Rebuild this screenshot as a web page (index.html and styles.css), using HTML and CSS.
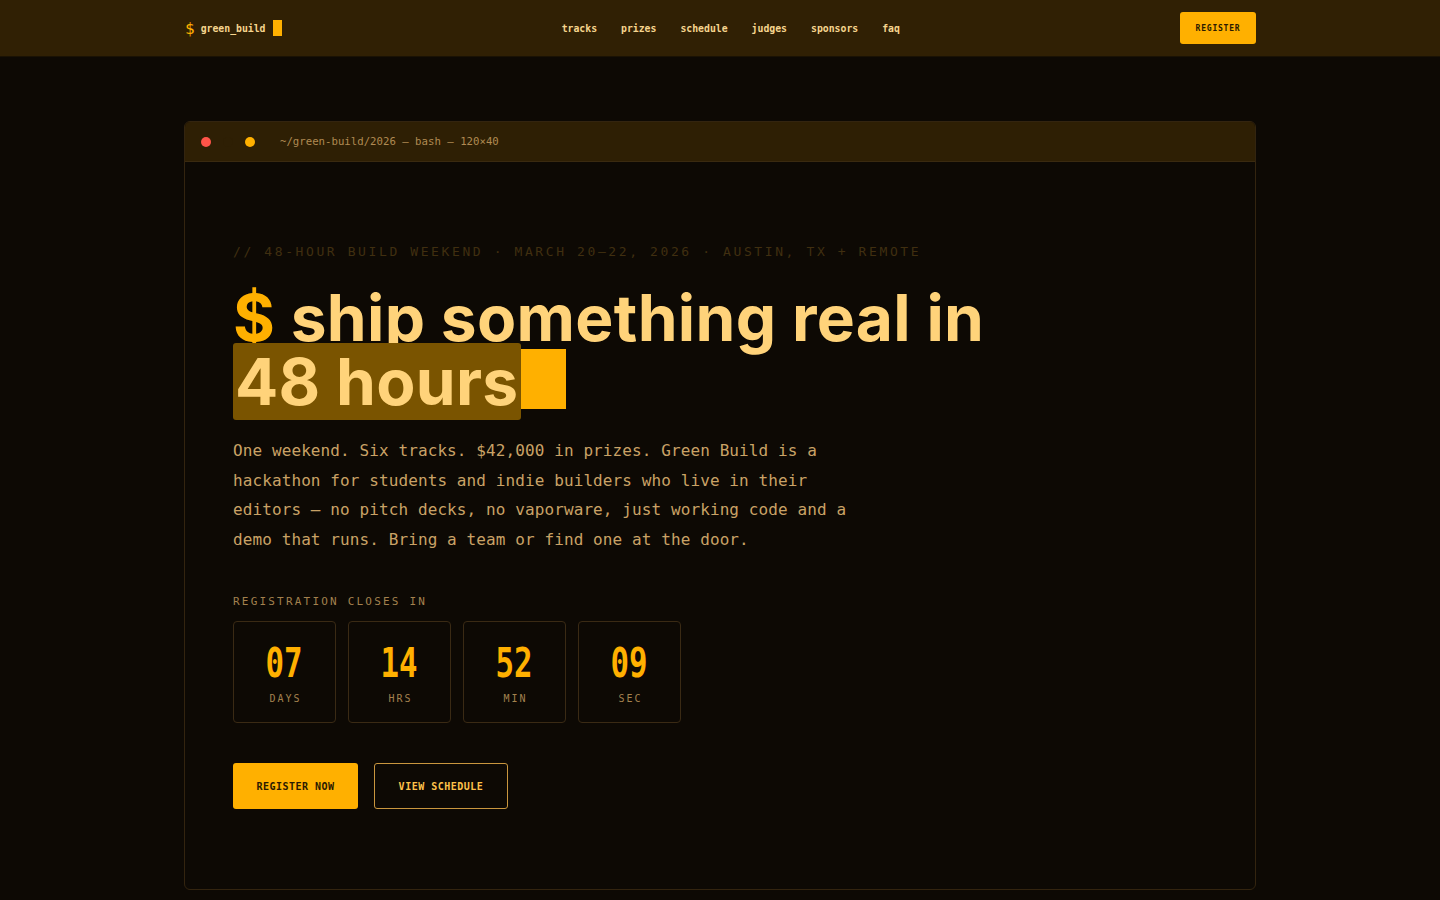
FILE: index.html
```html
<!DOCTYPE html>
<html lang="en">
<head>
<meta charset="utf-8">
<title>green_build</title>
<link rel="stylesheet" href="styles.css">
</head>
<body>
<header class="nav">
  <div class="nav-inner">
    <a class="logo" href="#"><span class="logo-dollar">$</span><span class="logo-name">green_build</span><span class="logo-cursor"></span></a>
    <nav class="links">
      <a href="#">tracks</a>
      <a href="#">prizes</a>
      <a href="#">schedule</a>
      <a href="#">judges</a>
      <a href="#">sponsors</a>
      <a href="#">faq</a>
    </nav>
    <a class="nav-btn" href="#">REGISTER</a>
  </div>
</header>
<main class="main">
  <section class="term">
    <div class="term-bar">
      <span class="dot dot-red"></span>
      <span class="dot dot-green"></span>
      <span class="dot dot-amber"></span>
      <span class="term-title">~/green-build/2026 — bash — 120×40</span>
    </div>
    <div class="term-body">
      <p class="eyebrow">// 48-HOUR BUILD WEEKEND · MARCH 20–22, 2026 · AUSTIN, TX + REMOTE</p>
      <h1 class="headline"><span class="prompt">$</span> ship something real in<br><span class="hl">48 hours</span><span class="cursor"></span></h1>
      <p class="lede">One weekend. Six tracks. $42,000 in prizes. Green Build is a hackathon for students and indie builders who live in their editors — no pitch decks, no vaporware, just working code and a demo that runs. Bring a team or find one at the door.</p>
      <p class="count-label">REGISTRATION CLOSES IN</p>
      <div class="countdown">
        <div class="cell"><span class="num">07</span><span class="unit">DAYS</span></div>
        <div class="cell"><span class="num">14</span><span class="unit">HRS</span></div>
        <div class="cell"><span class="num">52</span><span class="unit">MIN</span></div>
        <div class="cell"><span class="num">09</span><span class="unit">SEC</span></div>
      </div>
      <div class="actions">
        <a class="btn btn-primary" href="#">REGISTER NOW</a>
        <a class="btn btn-ghost" href="#">VIEW SCHEDULE</a>
      </div>
    </div>
  </section>
</main>
</body>
</html>
```
FILE: styles.css
```css
* { box-sizing: border-box; }
html, body { margin: 0; padding: 0; }
body {
  background: #0d0904;
  color: #c9a266;
  font-family: "DejaVu Sans Mono", "Liberation Mono", monospace;
  min-height: 900px;
}
a { text-decoration: none; color: inherit; }

.nav {
  background: #302004;
  height: 57px;
  border-bottom: 1px solid #1a1204;
}
.nav-inner {
  max-width: 1120px;
  margin: 0 auto;
  padding: 0 24px;
  height: 56px;
  display: flex;
  align-items: center;
  justify-content: space-between;
}
.logo {
  display: flex;
  align-items: center;
  font-size: 9.8px;
  font-weight: bold;
  color: #f6d58e;
}
.logo-dollar {
  color: #ffb000;
  font-size: 16px;
  font-weight: normal;
  margin-right: 6px;
  margin-left: 1px;
}
.logo-cursor {
  display: inline-block;
  width: 9px;
  height: 16px;
  background: #ffb000;
  margin-left: 7px;
}
.links {
  display: flex;
  gap: 24px;
  font-size: 9.8px;
  font-weight: bold;
  color: #f6d58e;
}
.nav-btn {
  background: #ffb000;
  color: #2a1a00;
  font-size: 8px;
  font-weight: bold;
  letter-spacing: 0.1em;
  width: 76px;
  height: 32px;
  border-radius: 3px;
  display: flex;
  align-items: center;
  justify-content: center;
}

.main {
  max-width: 1120px;
  margin: 0 auto;
  padding: 64px 24px 0;
}
.term {
  border: 1px solid #33240f;
  border-radius: 6px;
  overflow: hidden;
  background: #0d0904;
}
.term-bar {
  height: 40px;
  background: #2e1f04;
  border-bottom: 1px solid #3a2a10;
  display: flex;
  align-items: center;
  padding: 0 16px;
  gap: 12px;
}
.dot {
  width: 10px;
  height: 10px;
  border-radius: 50%;
}
.dot-red { background: #ff5449; }
.dot-green { background: #2e1f04; }
.dot-amber { background: #ffb000; }
.term-title {
  font-size: 10.7px;
  color: #b08a52;
  margin-left: 13px;
}
.term-body {
  padding: 80px 48px 80px;
}
.eyebrow {
  margin: 0;
  font-size: 13px;
  line-height: 20px;
  letter-spacing: 0.2em;
  color: #402f10;
}
.headline {
  margin: 24px 0 0;
  font-family: "Inter", "Noto Sans", sans-serif;
  font-weight: 700;
  font-size: 64px;
  line-height: 63px;
  letter-spacing: 0.005em;
  color: #ffd37a;
}
.prompt { color: #ffb000; }
.hl {
  background: #7a5400;
  padding: 0 2px 0 2px;
  border-radius: 3px;
}
.cursor {
  display: inline-block;
  width: 45px;
  height: 60px;
  background: #ffb000;
  vertical-align: -4px;
}
.lede {
  margin: 23px 0 0;
  max-width: 630px;
  font-size: 16px;
  line-height: 29.5px;
  letter-spacing: 0.1px;
  color: #c9a266;
}
.count-label {
  margin: 40px 0 0;
  font-size: 11px;
  line-height: 16px;
  letter-spacing: 0.2em;
  color: #a3814e;
}
.countdown {
  display: flex;
  gap: 12px;
  margin-top: 11px;
}
.cell {
  width: 103px;
  height: 102px;
  border: 1px solid #3a2a14;
  border-radius: 4px;
  display: flex;
  flex-direction: column;
  align-items: center;
  justify-content: center;
}
.num {
  display: inline-block;
  font-size: 40px;
  line-height: 40px;
  font-weight: bold;
  color: #ffb000;
  transform: scaleX(0.77);
  margin-top: 3px;
}
.unit {
  margin-top: 10px;
  font-size: 10px;
  letter-spacing: 0.2em;
  color: #a3814e;
  padding-left: 0.2em;
}
.actions {
  display: flex;
  gap: 16px;
  margin-top: 40px;
}
.btn {
  height: 46px;
  padding: 0 22px;
  display: flex;
  align-items: center;
  justify-content: center;
  white-space: nowrap;
  font-size: 10px;
  font-weight: bold;
  letter-spacing: 0.05em;
  border-radius: 3px;
}
.btn-primary {
  background: #ffb000;
  color: #2a1a00;
  width: 125px;
}
.btn-ghost {
  border: 1px solid #c9963e;
  color: #ffc24a;
  width: 134px;
}
```
